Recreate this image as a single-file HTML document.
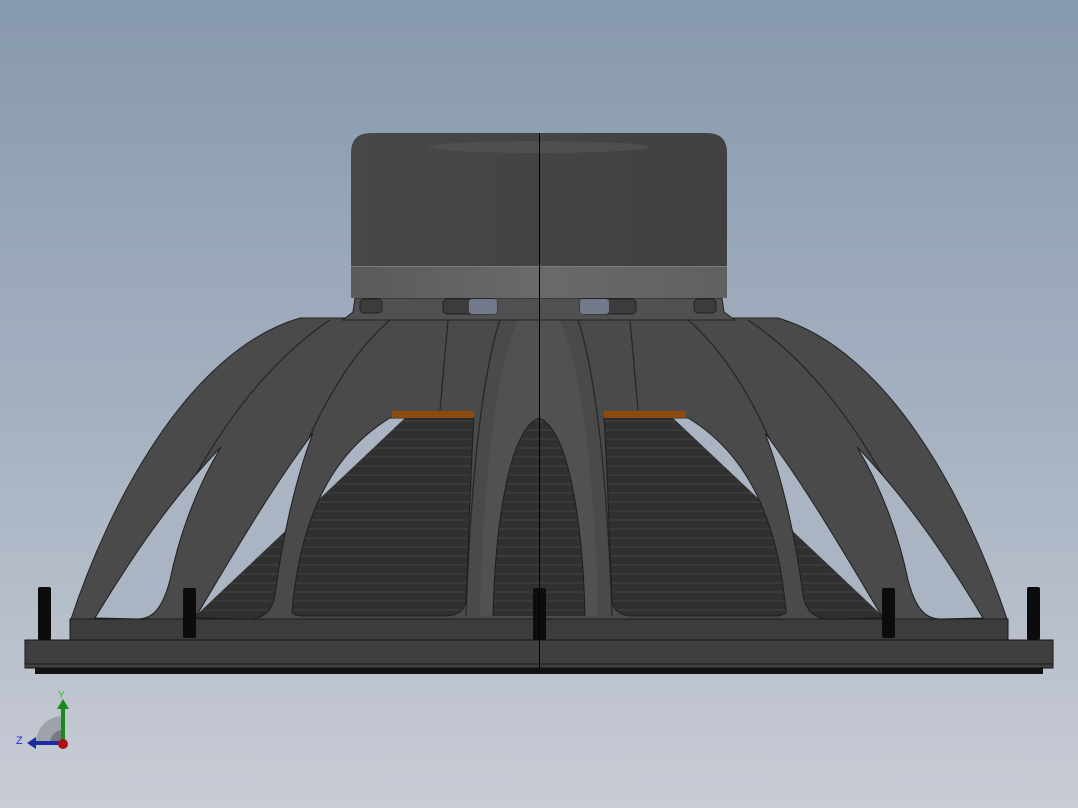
<!DOCTYPE html>
<html><head><meta charset="utf-8"><style>
html,body{margin:0;padding:0;width:1078px;height:808px;overflow:hidden}
svg{display:block}
</style></head><body>
<svg width="1078" height="808" viewBox="0 0 1078 808" xmlns="http://www.w3.org/2000/svg">
<defs>
<linearGradient id="bg" x1="0" y1="0" x2="0" y2="1">
<stop offset="0" stop-color="#8799ae"/><stop offset="0.5" stop-color="#a4b0c0"/><stop offset="1" stop-color="#c9ccd5"/>
</linearGradient>
<linearGradient id="mag" x1="0" y1="0" x2="1" y2="0">
<stop offset="0" stop-color="#474747"/><stop offset="0.5" stop-color="#444"/><stop offset="1" stop-color="#414141"/>
</linearGradient>
<linearGradient id="band" x1="0" y1="0" x2="1" y2="0">
<stop offset="0" stop-color="#5a5a5a"/><stop offset="0.5" stop-color="#6a6a6a"/><stop offset="1" stop-color="#606060"/>
</linearGradient>
<pattern id="stripes" width="8" height="9" patternUnits="userSpaceOnUse">
<rect width="8" height="9" fill="#303030"/><rect y="6" width="8" height="2" fill="#3a3a3a"/>
</pattern>
<clipPath id="win">
<path d="M95,618 C130,560 170,500 221,447 C195,490 178,540 170,580 C162,610 152,619 137,619 Z"/>
<path d="M195,618 C230,560 270,490 313,433 C295,480 282,540 275,595 C272,612 262,619 248,619 Z"/>
<path d="M292,612 C298,540 320,460 390,418 L474,418 C470,480 468,560 466,600 C465,612 455,616 445,616 L305,616 C297,616 292,614 292,612 Z"/>
<path transform="translate(1078,0) scale(-1,1)" d="M95,618 C130,560 170,500 221,447 C195,490 178,540 170,580 C162,610 152,619 137,619 Z"/>
<path transform="translate(1078,0) scale(-1,1)" d="M195,618 C230,560 270,490 313,433 C295,480 282,540 275,595 C272,612 262,619 248,619 Z"/>
<path transform="translate(1078,0) scale(-1,1)" d="M292,612 C298,540 320,460 390,418 L474,418 C470,480 468,560 466,600 C465,612 455,616 445,616 L305,616 C297,616 292,614 292,612 Z"/>
<path d="M493,616 C495,530 508,430 539,418 C570,430 583,530 585,616 Z"/>
</clipPath>
</defs>
<rect width="1078" height="808" fill="url(#bg)"/>

<!-- basket body -->
<path d="M70,622 C110,500 190,350 300,318 L778,318 C888,350 968,500 1008,622 Z" fill="#4a4a4a" stroke="#222" stroke-width="1"/>
<g fill="#575757" opacity="0.5">
<path d="M480,616 C482,500 495,360 520,318 L558,318 C583,360 596,500 598,616 Z"/>
</g>
<g fill="none" stroke="#262626" stroke-width="1.2">
<path d="M137,619 C170,500 240,380 330,320"/>
<path d="M248,619 C280,500 320,380 390,320"/>
<path d="M466,616 C470,500 480,380 500,320"/>
<path d="M612,616 C608,500 598,380 578,320"/>
<path d="M941,619 C908,500 838,380 748,320"/>
<path d="M830,619 C798,500 758,380 688,320"/>
<path d="M440,410 L448,320"/><path d="M638,410 L630,320"/>
</g>

<!-- windows: background then cone -->
<g clip-path="url(#win)">
<rect width="1078" height="808" fill="#aab4c3"/>
<path d="M170,640 L405,418 L673,418 L908,640 Z" fill="url(#stripes)"/>
</g>
<g fill="none" stroke="#1e1e1e" stroke-width="1">
<path d="M95,618 C130,560 170,500 221,447 C195,490 178,540 170,580 C162,610 152,619 137,619 Z"/>
<path d="M195,618 C230,560 270,490 313,433 C295,480 282,540 275,595 C272,612 262,619 248,619 Z"/>
<path d="M292,612 C298,540 320,460 390,418 L474,418 C470,480 468,560 466,600 C465,612 455,616 445,616 L305,616 C297,616 292,614 292,612 Z"/>
<g transform="translate(1078,0) scale(-1,1)">
<path d="M95,618 C130,560 170,500 221,447 C195,490 178,540 170,580 C162,610 152,619 137,619 Z"/>
<path d="M195,618 C230,560 270,490 313,433 C295,480 282,540 275,595 C272,612 262,619 248,619 Z"/>
<path d="M292,612 C298,540 320,460 390,418 L474,418 C470,480 468,560 466,600 C465,612 455,616 445,616 L305,616 C297,616 292,614 292,612 Z"/>
</g>
<path d="M493,616 C495,530 508,430 539,418 C570,430 583,530 585,616"/>
</g>
<!-- orange edges -->
<rect x="392" y="411" width="82" height="7" fill="#8a4a10"/>
<rect x="604" y="411" width="82" height="7" fill="#8a4a10"/>

<!-- plate under magnet -->
<path d="M355,298 L722,298 L724,312 L735,320 L343,320 L353,312 Z" fill="#505050" stroke="#222" stroke-width="1"/>
<rect x="360" y="299" width="22" height="14" rx="4" fill="#3c3c3c" stroke="#222"/>
<rect x="443" y="299" width="54" height="15" rx="4" fill="#3c3c3c" stroke="#222"/>
<rect x="469" y="299" width="28" height="15" rx="3" fill="#737a8c"/>
<rect x="580" y="299" width="56" height="15" rx="4" fill="#3c3c3c" stroke="#222"/>
<rect x="580" y="299" width="29" height="15" rx="3" fill="#737a8c"/>
<rect x="694" y="299" width="22" height="14" rx="4" fill="#3c3c3c" stroke="#222"/>

<!-- magnet -->
<path d="M351,266 L351,153 Q351,133 371,133 L707,133 Q727,133 727,153 L727,266 Z" fill="url(#mag)"/>
<ellipse cx="539" cy="147" rx="110" ry="6" fill="#5a5a5a" opacity="0.5"/>
<rect x="351" y="266" width="376" height="32" fill="url(#band)"/>
<line x1="351" y1="266.5" x2="727" y2="266.5" stroke="#7a7a7a"/>

<!-- base ring and flange -->
<rect x="70" y="619" width="938" height="21" fill="#3c3c3c" stroke="#1a1a1a"/>
<rect x="25" y="640" width="1028" height="28" fill="#3f3f3f" stroke="#151515"/>
<line x1="25" y1="664" x2="1053" y2="664" stroke="#1a1a1a"/>
<rect x="35" y="668" width="1008" height="6" fill="#111"/>

<!-- bolts -->
<g fill="#0c0c0c">
<rect x="38" y="587" width="13" height="53" rx="2"/>
<rect x="183" y="588" width="13" height="50" rx="2"/>
<rect x="533" y="588" width="13" height="52" rx="2"/>
<rect x="882" y="588" width="13" height="50" rx="2"/>
<rect x="1027" y="587" width="13" height="53" rx="2"/>
</g>

<line x1="539.5" y1="133" x2="539.5" y2="668" stroke="#000" stroke-width="1"/>

<!-- triad -->
<path d="M36,743 A27,27 0 0 1 63,716 L63,743 Z" fill="#9ea2aa"/>
<path d="M50,743 A13,13 0 0 1 63,730 L63,743 Z" fill="#777a80"/>
<rect x="61" y="705" width="4" height="38" fill="#1a8a1a"/>
<path d="M57,709 L63,699 L69,709 Z" fill="#1a8a1a"/>
<rect x="33" y="741" width="30" height="4" fill="#1a2aa0"/>
<path d="M36,737 L27,743 L36,749 Z" fill="#1a2aa0"/>
<circle cx="63" cy="744" r="5" fill="#b01010"/>
<text x="58" y="698" font-family="Liberation Sans, sans-serif" font-size="10" fill="#22cc22">Y</text>
<text x="16" y="744" font-family="Liberation Sans, sans-serif" font-size="11" fill="#1a2aee">Z</text>
</svg>
</body></html>
